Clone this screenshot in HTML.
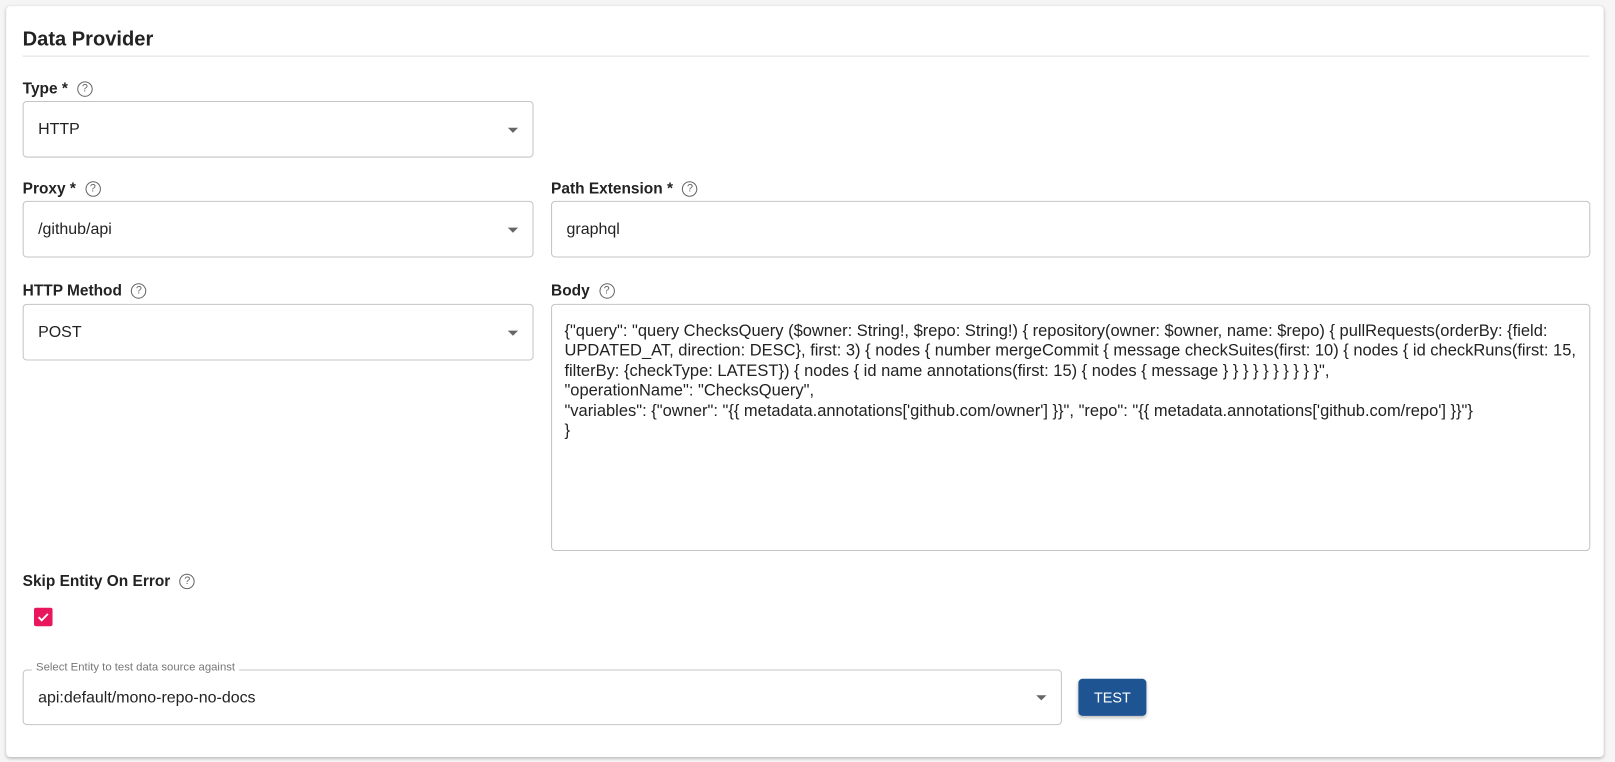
<!DOCTYPE html>
<html><head><style>
body{margin:0;width:1615px;height:762px;background:#f5f5f5;font-family:"Liberation Sans",Arial,sans-serif;color:#222;overflow:hidden}
#w{position:absolute;left:0;top:0;width:1568px;height:740px;transform:scale(1.03);transform-origin:0 0}
.card{position:absolute;left:6px;top:6px;width:1551px;height:729px;background:#fff;border-radius:4px;box-shadow:0 1px 3px rgba(0,0,0,.25)}
.abs{position:absolute}
.title{left:22px;top:27px;font-size:19.5px;font-weight:bold;color:#222}
.hr{left:22px;top:54px;width:1521px;height:1px;background:#e0e0e0}
.lbl{font-size:15px;font-weight:bold;color:#222;display:flex;align-items:center;height:20px}
.q{display:inline-block;width:13px;height:13px;border:1.5px solid #666;border-radius:50%;font-size:10.5px;font-weight:normal;color:#666;text-align:center;line-height:13px;margin-left:9px}
.box{border:1px solid #c4c4c4;border-radius:4px;box-sizing:border-box;font-size:15.5px;color:#222}
.val{position:absolute;left:14px;top:50%;transform:translateY(-50%)}
.arr{position:absolute;right:14px;top:50%;margin-top:-2px;width:0;height:0;border-left:5px solid transparent;border-right:5px solid transparent;border-top:5px solid #666}
.body{font-size:16px;line-height:19.4px;padding:16px 12px;white-space:nowrap}
</style></head><body><div id="w">
<div class="card"></div>
<div class="abs title">Data Provider</div>
<div class="abs hr"></div>

<div class="abs lbl" style="left:22px;top:76px">Type *<span class="q">?</span></div>
<div class="abs box" style="left:22px;top:98px;width:496px;height:55px"><span class="val">HTTP</span><span class="arr"></span></div>

<div class="abs lbl" style="left:22px;top:173px">Proxy *<span class="q">?</span></div>
<div class="abs box" style="left:22px;top:195px;width:496px;height:55px"><span class="val">/github/api</span><span class="arr"></span></div>

<div class="abs lbl" style="left:535px;top:173px">Path Extension *<span class="q">?</span></div>
<div class="abs box" style="left:535px;top:195px;width:1009px;height:55px"><span class="val">graphql</span></div>

<div class="abs lbl" style="left:22px;top:272px">HTTP Method<span class="q">?</span></div>
<div class="abs box" style="left:22px;top:295px;width:496px;height:55px"><span class="val">POST</span><span class="arr"></span></div>

<div class="abs lbl" style="left:535px;top:272px">Body<span class="q">?</span></div>
<div class="abs box body" style="left:535px;top:295px;width:1009px;height:240px">{"query": "query ChecksQuery ($owner: String!, $repo: String!) { repository(owner: $owner, name: $repo) { pullRequests(orderBy: {field:<br>UPDATED_AT, direction: DESC}, first: 3) { nodes { number mergeCommit { message checkSuites(first: 10) { nodes { id checkRuns(first: 15,<br>filterBy: {checkType: LATEST}) { nodes { id name annotations(first: 15) { nodes { message } } } } } } } } } }",<br>"operationName": "ChecksQuery",<br>"variables": {"owner": "{{ metadata.annotations['github.com/owner'] }}", "repo": "{{ metadata.annotations['github.com/repo'] }}"}<br>}</div>

<div class="abs lbl" style="left:22px;top:554px">Skip Entity On Error<span class="q">?</span></div>
<div class="abs" style="left:33px;top:590px;width:18px;height:18px;background:#e8175d;border-radius:2px"><svg width="18" height="18" viewBox="0 0 18 18"><path d="M4.5 9.2l3 3 6-6.2" fill="none" stroke="#fff" stroke-width="1.8"/></svg></div>

<div class="abs box" style="left:22px;top:650px;width:1009px;height:54px"><span class="val" style="top:27px">api:default/mono-repo-no-docs</span><span class="arr"></span></div>
<div class="abs" style="left:31px;top:642px;padding:0 4px;background:#fff;font-size:11px;color:#777">Select Entity to test data source against</div>
<div class="abs" style="left:1047px;top:659px;width:66px;height:36px;background:#1f5493;border-radius:4px;color:#fff;font-size:14px;text-align:center;line-height:36px;box-shadow:0 2px 3px rgba(0,0,0,.25)">TEST</div>
</div></body></html>
